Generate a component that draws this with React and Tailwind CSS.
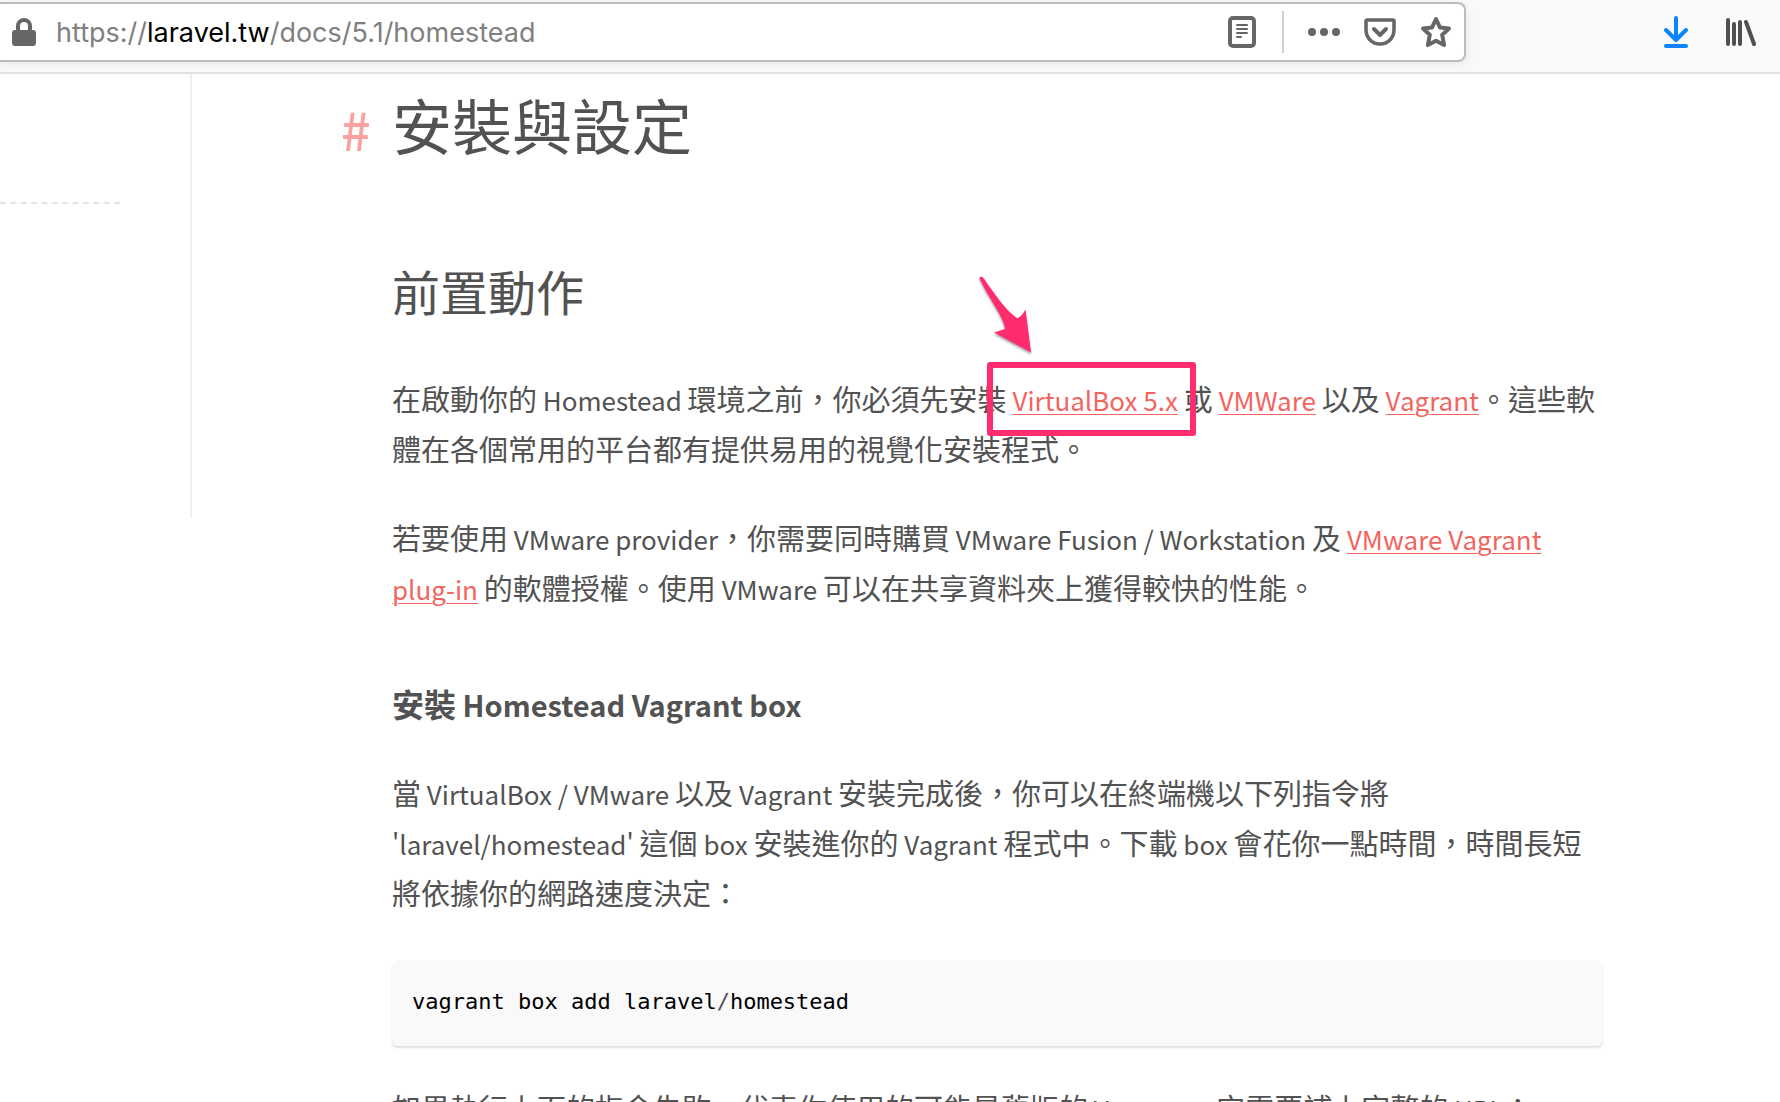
import React from "react";

/* Latin letters are set a little smaller than the Chinese text around them. */
function Latin({ children }) {
  return <span className="text-[26px] leading-none">{children}</span>;
}

function DocLink({ children }) {
  return (
    <a
      href="#"
      className="text-[26px] leading-none text-[#f4645f] underline decoration-1 underline-offset-[3px]"
    >
      {children}
    </a>
  );
}

function Highlight({ children }) {
  return (
    <span className="relative text-[26px] leading-none">
      {children}
      <span className="pointer-events-none absolute -top-[19px] -right-[18px] -bottom-[18px] -left-[25px] rounded-[3px] border-[6px] border-[#ff2d6e]" />
      <svg
        className="pointer-events-none absolute -top-[106px] -left-[36px] drop-shadow-[0_2px_1px_rgba(0,0,0,0.35)]"
        width="60"
        height="82"
        viewBox="0 0 60 82"
        aria-hidden="true"
      >
        <path
          d="M3.400 3.400C3.800 1.400 6.200 1.200 7.600 3.200C18 18 31 37 41.500 43.200C45 42 47.500 38 49.500 34.500L55 77.500L18 57.500L29 54C28.500 43 14 25.500 3.400 3.400Z"
          fill="#ff2d6e"
        />
      </svg>
    </span>
  );
}

function LockIcon() {
  return (
    <svg width="24" height="28" viewBox="0 0 24 28" aria-hidden="true">
      <path d="M6 13V8a6 6 0 0 1 12 0v5" fill="none" stroke="#666" strokeWidth="4" />
      <rect x="0" y="12" width="24" height="16" rx="3" fill="#666" />
    </svg>
  );
}

function ReaderIcon() {
  return (
    <svg width="28" height="32" viewBox="0 0 28 32" aria-hidden="true">
      <rect x="2" y="2" width="24" height="28" rx="3" fill="none" stroke="#666" strokeWidth="4" />
      <path
        d="M9 9h10M9 13h10M9 17h10M9 21h4"
        stroke="#666"
        strokeWidth="2"
        strokeLinecap="round"
      />
    </svg>
  );
}

function DotsIcon() {
  return (
    <svg width="32" height="8" viewBox="0 0 32 8" aria-hidden="true" fill="#666">
      <circle cx="4" cy="4" r="4" />
      <circle cx="16" cy="4" r="4" />
      <circle cx="28" cy="4" r="4" />
    </svg>
  );
}

function PocketIcon() {
  return (
    <svg
      width="32"
      height="28"
      viewBox="0 0 32 28"
      aria-hidden="true"
      fill="none"
      stroke="#666"
      strokeLinecap="round"
      strokeLinejoin="round"
    >
      <path d="M3 2h26a1 1 0 0 1 1 1v9a14 14 0 0 1-28 0V3a1 1 0 0 1 1-1Z" strokeWidth="3.600" />
      <path d="M10 11l6 6 6-6" strokeWidth="4" />
    </svg>
  );
}

function StarIcon() {
  return (
    <svg width="32" height="32" viewBox="0 0 32 32" aria-hidden="true">
      <path
        d="M16 3l3.900 8.400 9.100 1.100-6.800 6.300 1.900 10.200L16 24.800 7.900 29l1.900-10.200L3 12.500l9.100-1.100Z"
        fill="none"
        stroke="#666"
        strokeWidth="4"
        strokeLinejoin="round"
      />
    </svg>
  );
}

function DownloadIcon() {
  return (
    <svg
      width="24"
      height="32"
      viewBox="0 0 24 32"
      aria-hidden="true"
      fill="none"
      stroke="#0a84ff"
      strokeWidth="4"
      strokeLinecap="round"
      strokeLinejoin="round"
    >
      <path d="M12 2v21M2 14l10 10 10-10M2 30h20" />
    </svg>
  );
}

function LibraryIcon() {
  return (
    <svg
      width="30"
      height="28"
      viewBox="0 0 30 28"
      aria-hidden="true"
      fill="none"
      stroke="#505050"
      strokeWidth="4"
      strokeLinecap="round"
    >
      <path d="M2 2v24M8 6v20M14 4v22M20 4l8 22" />
    </svg>
  );
}

function Toolbar() {
  return (
    <header className="flex h-[74px] shrink-0 items-start border-b-2 border-[#e1e1e1] bg-[#f9f9f9] pt-0.5">
      <div className="flex h-[60px] flex-1 items-center rounded-r-lg border-2 border-l-0 border-[#bcbcbc] bg-white pr-3 pl-3 shadow-[0_2px_8px_rgba(0,0,0,0.08)]">
        <LockIcon />
        <div
          role="textbox"
          aria-label="Address"
          contentEditable
          suppressContentEditableWarning
          className="ml-5 flex-1 pt-0.5 font-['Inter',sans-serif] text-[27px] leading-9 whitespace-nowrap text-[#808080] outline-none"
        >
          https://<span className="text-black">laravel.tw</span>/docs/5.1/homestead
        </div>
        <button type="button" aria-label="Reader view">
          <ReaderIcon />
        </button>
        <span className="ml-[26px] h-[42px] w-0.5 bg-[#d0d0d0]" />
        <div className="ml-6 flex items-center gap-6">
          <button type="button" aria-label="Page actions">
            <DotsIcon />
          </button>
          <button type="button" aria-label="Save to Pocket">
            <PocketIcon />
          </button>
          <button type="button" aria-label="Bookmark this page">
            <StarIcon />
          </button>
        </div>
      </div>
      <div className="flex h-[60px] items-center gap-[38px] pr-6 pl-[198px]">
        <button type="button" aria-label="Downloads">
          <DownloadIcon />
        </button>
        <button type="button" aria-label="Library">
          <LibraryIcon />
        </button>
      </div>
    </header>
  );
}

export default function App() {
  return (
    <div
      lang="zh-Hant"
      className="flex h-screen flex-col overflow-hidden bg-white font-['Noto_Sans_CJK_TC',sans-serif] text-[29px] leading-[50px] text-[#525252]"
    >
      <Toolbar />
      <div className="flex min-h-0 flex-1 items-start overflow-hidden">
        <aside className="h-[443px] w-[192px] shrink-0 border-r-2 border-[#efefef] pt-32">
          <hr className="mr-[70px] border-0 border-t-2 border-dashed border-[#e5e5e5]" />
        </aside>
        <main className="min-w-0 flex-1 pt-3.5 pr-[177px] pl-[200px]">
          <h1 className="relative text-[60px] leading-[72px]">
            <a
              href="#"
              className="absolute top-[5px] -left-[51px] text-[52px] font-medium text-[#f9a29f]"
            >
              #
            </a>
            安裝與設定
          </h1>
          <h2 className="mt-[100px] text-[48px] leading-[60px]">前置動作</h2>
          <p className="mt-[53px]">
            在啟動你的<Latin> Homestead </Latin>環境之前，你必須先安裝<Latin> </Latin>
            <Highlight>
              <DocLink>VirtualBox 5.x</DocLink>
            </Highlight>
            <Latin> </Latin>或<Latin> </Latin>
            <DocLink>VMWare</DocLink>
            <Latin> </Latin>以及<Latin> </Latin>
            <DocLink>Vagrant</DocLink>。這些軟體在各個常用的平台都有提供易用的視覺化安裝程式。
          </p>
          <p className="mt-[39px]">
            若要使用<Latin> VMware provider</Latin>，你需要同時購買
            <Latin> VMware Fusion / Workstation </Latin>及<Latin> </Latin>
            <DocLink>
              VMware Vagrant <span className="whitespace-nowrap">plug-in</span>
            </DocLink>
            <Latin> </Latin>的軟體授權。使用<Latin> VMware </Latin>
            可以在共享資料夾上獲得較快的性能。
          </p>
          <h3 className="mt-[66px] text-[32px] font-bold">
            安裝<span className="text-[29px] leading-none"> Homestead Vagrant box</span>
          </h3>
          <p className="mt-[39px]">
            當<Latin> VirtualBox / VMware </Latin>以及<Latin> Vagrant </Latin>
            安裝完成後，你可以在終端機以下列指令將<Latin> </Latin>
            <span className="whitespace-nowrap">
              <Latin>'laravel/homestead'</Latin>
            </span>
            <Latin> </Latin>這個<Latin> box </Latin>安裝進你的<Latin> Vagrant </Latin>
            程式中。下載<Latin> box </Latin>
            會花你一點時間，時間長短將依據你的網路速度決定：
          </p>
          <pre className="mt-[43px] rounded-md bg-[#f9f9f9] px-5 py-6 text-[22px] leading-9 text-black shadow-[0_2px_2px_rgba(0,0,0,0.12)]">
            <code className="font-['DejaVu_Sans_Mono',monospace]">
              vagrant box add laravel<span className="text-[#525252]">/</span>homestead
            </code>
          </pre>
          <p className="mt-[36px]">
            如果執行上面的指令失敗，代表你使用的可能是舊版的<Latin> Vagrant</Latin>
            ，它需要補上完整的<Latin> URL</Latin>：
          </p>
        </main>
      </div>
    </div>
  );
}
